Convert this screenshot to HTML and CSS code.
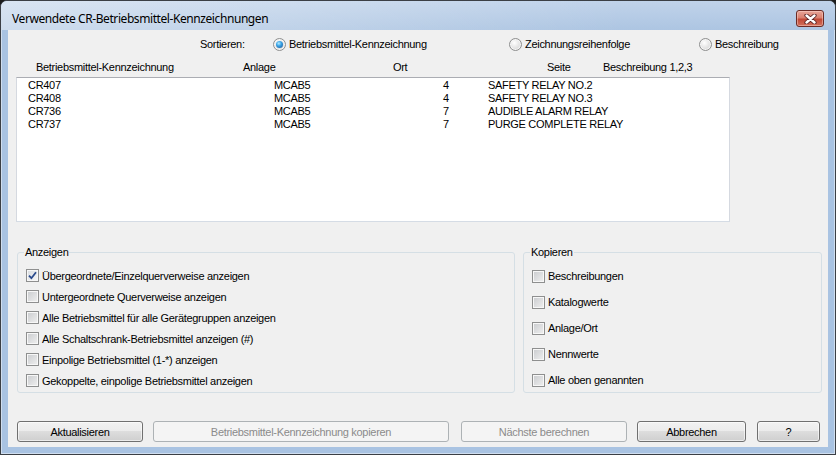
FILE: index.html
```html
<!DOCTYPE html>
<html lang="de">
<head>
    <meta charset="UTF-8">
    <title>Verwendete CR-Betriebsmittel-Kennzeichnungen</title>
    <link rel="stylesheet" href="styles.css">
</head>
<body>
    <div class="window">
        <div class="titlebar">
            <span class="title">Verwendete CR-Betriebsmittel-Kennzeichnungen</span>
            <button class="close-btn" type="button">
                <svg width="13" height="10" viewBox="0 0 13 10">
                    <path d="M2.5 1.5 L10.5 8.5 M10.5 1.5 L2.5 8.5" stroke="#5a2323" stroke-width="4.2" stroke-linecap="round"/>
                    <path d="M2.5 1.5 L10.5 8.5 M10.5 1.5 L2.5 8.5" stroke="#ffffff" stroke-width="2.4" stroke-linecap="round"/>
                </svg>
            </button>
        </div>

        <div class="client">
            <!-- Sort options -->
            <div class="sort-row">
                <span class="sort-label">Sortieren:</span>
                <label class="radio-item r1"><span class="radio checked"></span>Betriebsmittel-Kennzeichnung</label>
                <label class="radio-item r2"><span class="radio"></span>Zeichnungsreihenfolge</label>
                <label class="radio-item"><span class="radio"></span>Beschreibung</label>
            </div>

            <!-- Column headers -->
            <div class="list-header">
                <span class="h-tag">Betriebsmittel-Kennzeichnung</span>
                <span class="h-anlage">Anlage</span>
                <span class="h-ort">Ort</span>
                <span class="h-seite">Seite</span>
                <span>Beschreibung 1,2,3</span>
            </div>

            <div class="listbox">
                <div class="row"><span class="c-tag">CR407</span><span class="c-anlage">MCAB5</span><span class="c-seite">4</span><span>SAFETY RELAY NO.2</span></div>
                <div class="row"><span class="c-tag">CR408</span><span class="c-anlage">MCAB5</span><span class="c-seite">4</span><span>SAFETY RELAY NO.3</span></div>
                <div class="row"><span class="c-tag">CR736</span><span class="c-anlage">MCAB5</span><span class="c-seite">7</span><span>AUDIBLE ALARM RELAY</span></div>
                <div class="row"><span class="c-tag">CR737</span><span class="c-anlage">MCAB5</span><span class="c-seite">7</span><span>PURGE COMPLETE RELAY</span></div>
            </div>

            <div class="groups">
                <fieldset class="group anzeigen">
                    <legend>Anzeigen</legend>
                    <label class="check">
                        <span class="box checked">
                            <svg width="9" height="9" viewBox="0 0 9 9"><path d="M1 4.6 L3.4 7.2 L8 1.2" fill="none" stroke="#2a4a8c" stroke-width="1.8"/></svg>
                        </span>Übergeordnete/Einzelquerverweise anzeigen
                    </label>
                    <label class="check"><span class="box"></span>Untergeordnete Querverweise anzeigen</label>
                    <label class="check"><span class="box"></span>Alle Betriebsmittel für alle Gerätegruppen anzeigen</label>
                    <label class="check"><span class="box"></span>Alle Schaltschrank-Betriebsmittel anzeigen (#)</label>
                    <label class="check"><span class="box"></span>Einpolige Betriebsmittel (1-*) anzeigen</label>
                    <label class="check"><span class="box"></span>Gekoppelte, einpolige Betriebsmittel anzeigen</label>
                </fieldset>

                <fieldset class="group kopieren">
                    <legend>Kopieren</legend>
                    <label class="check"><span class="box"></span>Beschreibungen</label>
                    <label class="check"><span class="box"></span>Katalogwerte</label>
                    <label class="check"><span class="box"></span>Anlage/Ort</label>
                    <label class="check"><span class="box"></span>Nennwerte</label>
                    <label class="check"><span class="box"></span>Alle oben genannten</label>
                </fieldset>
            </div>

            <div class="buttons">
                <button class="btn btn-refresh" type="button">Aktualisieren</button>
                <button class="btn btn-copy" type="button" disabled>Betriebsmittel-Kennzeichnung kopieren</button>
                <button class="btn btn-next" type="button" disabled>Nächste berechnen</button>
                <button class="btn btn-cancel" type="button">Abbrechen</button>
                <button class="btn btn-help" type="button">?</button>
            </div>
        </div>
    </div>
</body>
</html>
```

FILE: styles.css
```css
html, body {
    margin: 0;
    height: 100%;
    overflow: hidden;
    background: #1c1c1c;
    font-family: "Liberation Sans", Arial, sans-serif;
    font-size: 11px;
    letter-spacing: -0.3px;
    color: #000;
}

/* Window frame */
.window {
    width: 836px;
    height: 455px;
    box-sizing: border-box;
    border: 1px solid #3b3f45;
    border-radius: 7px 7px 0 0;
    background: #a9c3e2;
    box-shadow: inset 0 0 0 1px rgba(255, 255, 255, 0.45);
    display: flex;
    flex-direction: column;
}

.titlebar {
    height: 29px;
    box-sizing: border-box;
    padding: 5px 11px 0 11px;
    display: flex;
    align-items: center;
    justify-content: space-between;
    border-radius: 6px 6px 0 0;
    background:
        linear-gradient(to right, rgba(255, 255, 255, 0.4), rgba(255, 255, 255, 0) 75%),
        linear-gradient(#c0d3ea, #adc5e2);
}

.title {
    font-family: "Noto Sans", "Open Sans", sans-serif;
    font-size: 12px;
    letter-spacing: -0.42px;
    color: #000;
}

.close-btn {
    width: 28px;
    height: 17px;
    padding: 0;
    margin-top: 1px;
    border: 1px solid #6b2b25;
    border-radius: 3px;
    background: linear-gradient(#e8a598 0%, #d9806f 45%, #c14836 55%, #d2715c 100%);
    box-shadow: inset 0 0 0 1px rgba(255, 220, 210, 0.45);
    display: flex;
    align-items: center;
    justify-content: center;
}

/* Dialog body */
.client {
    flex: 1;
    margin: 0 7px 7px;
    padding-top: 6px;
    background: #f0f0f0;
}

.sort-row {
    height: 16px;
    padding-left: 192px;
    display: flex;
    align-items: center;
}

.sort-label {
    width: 73px;
}

.radio-item {
    display: flex;
    align-items: center;
    gap: 3px;
}

.radio-item.r1 { width: 236px; }
.radio-item.r2 { width: 190px; }

.radio {
    width: 13px;
    height: 13px;
    box-sizing: border-box;
    border: 1px solid #8e8f8f;
    border-radius: 50%;
    background: radial-gradient(circle at 40% 35%, #ffffff, #d6d6d6 80%);
    box-shadow: inset 0 0 0 1px #f6f6f6;
    display: flex;
    align-items: center;
    justify-content: center;
}

.radio.checked::after {
    content: "";
    width: 7px;
    height: 7px;
    border-radius: 50%;
    background: radial-gradient(circle at 40% 35%, #b4ecff 0, #39a3e6 40%, #1b4f8e 100%);
}

.list-header {
    margin-top: 8px;
    height: 14px;
    padding-left: 28px;
    display: flex;
    align-items: center;
}

.h-tag { width: 207px; }
.h-anlage { width: 150px; }
.h-ort { width: 154px; }
.h-seite { width: 56px; }

.listbox {
    margin: 3px 0 0 8px;
    width: 714px;
    height: 145px;
    box-sizing: border-box;
    padding: 1px 0 0 11px;
    background: #fff;
    border: 1px solid;
    border-color: #abadb3 #d5d9e0 #d5dce5 #d5d9e0;
}

.row {
    display: flex;
    height: 13px;
    line-height: 13px;
}

.c-tag { width: 246px; }
.c-anlage { width: 169px; }
.c-seite { width: 45px; }

/* Group boxes */
.groups {
    margin: 24px 0 0 9px;
    height: 147px;
    display: flex;
    gap: 8px;
}

.group {
    margin: 0;
    min-width: 0;
    box-sizing: border-box;
    padding: 7px 8px 0;
    border: 1px solid #d5dfe5;
    border-radius: 3px;
}

.group legend {
    line-height: 12px;
    padding: 0 1px;
    margin-left: -2px;
}

.anzeigen { width: 498px; }

.kopieren {
    width: 299px;
    padding-top: 5px;
}

.check {
    height: 21px;
    display: flex;
    align-items: center;
    gap: 3px;
}

.kopieren .check {
    height: 26px;
}

.box {
    width: 13px;
    height: 13px;
    box-sizing: border-box;
    border: 1px solid #8e8f8f;
    background: linear-gradient(135deg, #c9cbce, #f0f0f0);
    box-shadow: inset 0 0 0 1px #f7f7f7;
    display: flex;
    align-items: center;
    justify-content: center;
}

.box.checked {
    background: linear-gradient(135deg, #d7dbe0, #f7f7f7);
}

/* Bottom buttons */
.buttons {
    margin-top: 28px;
    padding-left: 9px;
    display: flex;
    gap: 10px;
}

.btn {
    height: 21px;
    padding: 0;
    font-family: "Liberation Sans", Arial, sans-serif;
    font-size: 11px;
    letter-spacing: -0.3px;
    color: #000;
    border: 1px solid #707070;
    border-radius: 3px;
    background: linear-gradient(#f2f2f2 0%, #ebebeb 50%, #dddddd 50%, #cfcfcf 100%);
    box-shadow: inset 0 0 0 1px rgba(255, 255, 255, 0.6);
}

.btn:disabled {
    color: #8b8b8b;
    border-color: #adb2b5;
    background: #f4f4f4;
    box-shadow: none;
}

.btn-refresh { width: 126px; }
.btn-copy { width: 296px; }
.btn-next { width: 166px; margin-left: 2px; }
.btn-cancel { width: 109px; }
.btn-help { width: 63px; margin-left: 1px; }
```
